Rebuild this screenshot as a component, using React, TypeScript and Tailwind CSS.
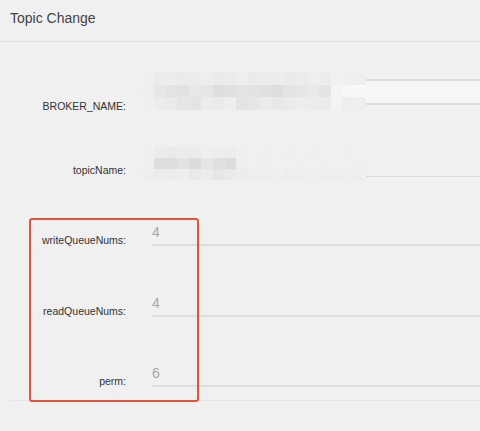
const BROKER_MOSAIC: string[][] = [
  ["#efefef", "#ececec", "#ededed", "#ebebeb", "#ececec", "#eeeeee", "#ebebeb", "#ececec", "#eeeeee", "#ebebeb", "#ececec", "#ededed", "#ebebeb", "#ececec", "#eeeeee", "#ededed", "#f1f1f1", "#efefef", "#eeeeee"],
  ["#eeeeee", "#e6e6e6", "#e3e3e3", "#e2e2e2", "#e8e8e8", "#e6e6e6", "#dedede", "#e0e0e0", "#e4e4e4", "#e2e2e2", "#e0e0e0", "#dddddd", "#e3e3e3", "#e6e6e6", "#e9e9e9", "#e4e4e4", "#f4f4f4", "#f7f7f7", "#f8f8f8"],
  ["#efefef", "#ececec", "#eaeaea", "#e6e6e6", "#e4e4e4", "#ececec", "#eaeaea", "#eeeeee", "#e4e4e4", "#e6e6e6", "#ebebeb", "#e8e8e8", "#eaeaea", "#ededed", "#ececec", "#ebebeb", "#f3f3f3", "#eeeeee", "#efefef"],
];

const TOPIC_MOSAIC: string[][] = [
  ["#efefef", "#ebebeb", "#eaeaea", "#ececec", "#ebebeb", "#efefef", "#ededed", "#ececec", "#efefef", "#f0f0f0", "#efefef", "#f0f0f0", "#efefef", "#f0f0f0", "#efefef", "#f0f0f0", "#f0f0f0", "#efefef", "#f0f0f0"],
  ["#efefef", "#dddddd", "#dedede", "#e3e3e3", "#dcdcdc", "#e6e6e6", "#e0e0e0", "#dcdcdc", "#eeeeee", "#f0f0f0", "#efefef", "#f0f0f0", "#f0f0f0", "#efefef", "#f0f0f0", "#efefef", "#f0f0f0", "#f0f0f0", "#efefef"],
  ["#eeeeee", "#ececec", "#ebebeb", "#eeeeee", "#e9e9e9", "#ececec", "#e6e6e6", "#eaeaea", "#ededed", "#eeeeee", "#eeeeee", "#efefef", "#ededed", "#eeeeee", "#efefef", "#eeeeee", "#ededed", "#efefef", "#eeeeee"],
];

function Mosaic({ cells, className }: { cells: string[][]; className: string }) {
  return (
    <div className={`absolute grid grid-cols-[repeat(19,1fr)] ${className}`}>
      {cells.flatMap((row, r) =>
        row.map((c, i) => <div key={`${r}-${i}`} style={{ backgroundColor: c }} />)
      )}
    </div>
  );
}

function Label({ children, className = "" }: { children: string; className?: string }) {
  return (
    <div className={`w-[126px] shrink-0 text-right text-[10.5px] leading-none text-[#333] ${className}`}>
      {children}
    </div>
  );
}

function NumberRow({ label, value, height }: { label: string; value: string; height: string }) {
  return (
    <div className={`flex items-end ${height}`}>
      <Label className="pb-[1px]">{label}</Label>
      <div className="ml-[26px] h-[22px] flex-1 border-b-2 border-[#dedede] text-[14px] leading-[16px] font-light text-[#a6a6a6]">
        {value}
      </div>
    </div>
  );
}

export default function App() {
  return (
    <div
      className="relative h-[431px] w-[480px] overflow-hidden bg-[#f0f0f0]"
      style={{ fontFamily: '"Liberation Sans", Arial, sans-serif' }}
    >
      <div className="h-[42px] border-b border-[#dfdfdf] px-[10px] pt-[10px] text-[14px] leading-[16px] text-[#444]">
        Topic Change
      </div>

      <div className="flex h-[63px] items-end">
        <Label className="mb-[-6px]">BROKER_NAME:</Label>
        <div className="relative ml-[26px] h-[26px] flex-1 border-y-2 border-[#dcdcdc] bg-[#f7f7f7]">
          <Mosaic cells={BROKER_MOSAIC} className="left-[-10px] top-[-9px] h-[38px] w-[224px] grid-rows-3" />
        </div>
      </div>

      <div className="flex h-[72px] items-end">
        <Label className="pb-[2px]">topicName:</Label>
        <div className="relative ml-[26px] h-[26px] flex-1 border-b border-dotted border-[#c8c8c8]">
          <Mosaic cells={TOPIC_MOSAIC} className="left-[-10px] top-[-4px] h-[33px] w-[224px] grid-rows-3" />
        </div>
      </div>

      <NumberRow label="writeQueueNums:" value="4" height="h-[69px]" />
      <NumberRow label="readQueueNums:" value="4" height="h-[71px]" />
      <NumberRow label="perm:" value="6" height="h-[70px]" />

      <div className="ml-[10px] mt-[13px] border-t border-[#e6e6e6]" />

      <div className="absolute left-[29px] top-[218px] h-[184px] w-[170px] rounded-[3px] border-2 border-[#e5533a]" />
    </div>
  );
}
